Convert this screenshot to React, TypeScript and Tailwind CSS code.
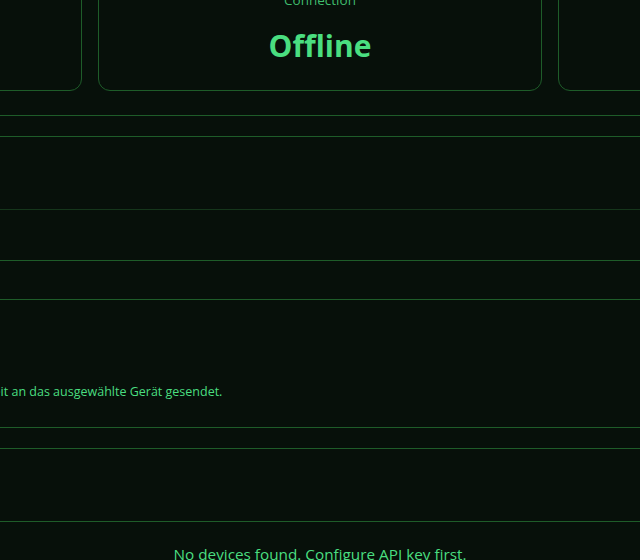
const stats = [
  { label: 'Devices', value: '0' },
  { label: 'Connection', value: 'Offline' },
  { label: 'Last Sync', value: '—' },
];

export default function App() {
  return (
    <div className="h-[560px] overflow-hidden bg-[#07100a] font-['Open_Sans',sans-serif] text-[#4ade80]">
      <div className="-mt-[35px] flex justify-center">
        <div className="w-[1364px] shrink-0">
          <div className="grid grid-cols-3 gap-4">
            {stats.map((stat) => (
              <div key={stat.label} className="rounded-xl border border-[#1e5c29] px-6 pt-6 pb-[26px] text-center">
                <div className="text-[13.5px] leading-5 text-[#4ade80]/85">{stat.label}</div>
                <div className="mt-[18px] text-3xl leading-9 font-bold">{stat.value}</div>
              </div>
            ))}
          </div>

          <hr className="mt-6 border-0 border-t border-[#1e5c29]" />

          {/* device picker */}
          <section className="mt-5 rounded-xl border border-[#1e5c29]">
            <div className="border-b border-[#15361b] px-6 py-6">
              <h2 className="text-base leading-6 font-semibold">Gerät auswählen</h2>
            </div>
            <div className="px-6 py-[13px] text-sm leading-6 text-[#4ade80]/80">Kein Gerät ausgewählt</div>
          </section>

          {/* live typing */}
          <section className="mt-[38px] rounded-xl border border-[#1e5c29] px-6 pt-6 pb-[27px]">
            <h2 className="text-base leading-6 font-semibold">Live-Eingabe</h2>
            <p className="mt-9 text-[12.5px] leading-4">
              Jeder eingetippte Buchstabe im Eingabefeld wird in Echtzeit an das ausgewählte Gerät gesendet.
            </p>
          </section>

          {/* device list */}
          <section className="mt-5 rounded-xl border border-[#1e5c29]">
            <div className="border-b border-[#1e5c29] px-6 py-6">
              <h2 className="text-base leading-6 font-semibold">Geräte</h2>
            </div>
            <div className="px-6 pt-5 pb-8 text-center text-[15.3px] leading-6">
              No devices found. Configure API key first.
            </div>
          </section>
        </div>
      </div>
    </div>
  );
}
